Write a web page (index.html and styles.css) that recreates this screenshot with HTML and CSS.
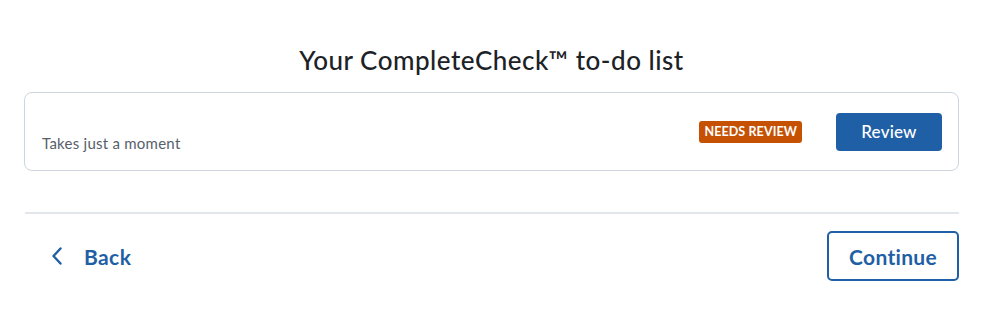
FILE: index.html
```html
<!DOCTYPE html>
<html lang="en">
<head>
<meta charset="utf-8">
<title>CompleteCheck</title>
<link rel="stylesheet" href="styles.css">
</head>
<body>
<main class="page">
  <h1 class="title">Your CompleteCheck™ to-do list</h1>
  <section class="card">
    <div class="card-text">
      <div class="card-heading"></div>
      <p class="card-sub">Takes just a moment</p>
    </div>
    <div class="card-actions">
      <span class="badge">NEEDS REVIEW</span>
      <button class="btn-primary">Review</button>
    </div>
  </section>
  <hr class="divider">
  <nav class="footer">
    <a class="back" href="#">
      <svg class="chev" width="12" height="18" viewBox="0 0 12 18" aria-hidden="true"><path d="M9.5 1.5 L2.5 9 L9.5 16.5" fill="none" stroke="#1f5fa6" stroke-width="2.4" stroke-linecap="round" stroke-linejoin="round"/></svg>
      <span>Back</span>
    </a>
    <button class="btn-outline">Continue</button>
  </nav>
</main>
</body>
</html>
```

FILE: styles.css
```css
* { box-sizing: border-box; }
body {
  margin: 0;
  background: #fff;
  font-family: Lato, "Noto Sans", "Liberation Sans", sans-serif;
  color: #1f2328;
}
.page {
  width: 935px;
  margin-left: 24px;
  padding-top: 42px;
}
.title {
  margin: 0;
  text-align: center;
  font-size: 26px;
  font-weight: 500;
  line-height: 36px;
  letter-spacing: 0.5px;
  color: #1d2226;
}
.card {
  margin-top: 14px;
  height: 79px;
  border: 1px solid #cdd6de;
  border-radius: 8px;
  padding: 0 16px 0 17px;
  display: flex;
  align-items: center;
  justify-content: space-between;
}
.card-text {
  align-self: flex-end;
  padding-bottom: 17px;
}
.card-sub {
  margin: 0;
  font-size: 15px;
  line-height: 20px;
  letter-spacing: 0.25px;
  color: #56606a;
}
.card-actions {
  display: flex;
  align-items: center;
  gap: 34px;
}
.badge {
  display: inline-flex;
  align-items: center;
  height: 22px;
  padding: 0 5px;
  background: #c65102;
  color: #fff;
  font-size: 12.5px;
  font-weight: 700;
  border-radius: 3px;
  letter-spacing: 0.1px;
}
.btn-primary {
  width: 106px;
  height: 38px;
  border: 0;
  border-radius: 4px;
  background: #1f5fa6;
  color: #fff;
  font-family: inherit;
  font-size: 17px;
  font-weight: 500;
  letter-spacing: 0.2px;
}
.divider {
  margin: 41px 0 0 1px;
  border: 0;
  height: 2px;
  background: #e3e7eb;
}
.footer {
  display: flex;
  justify-content: space-between;
  align-items: center;
  margin-top: 17px;
}
.back {
  display: flex;
  align-items: center;
  gap: 21px;
  padding-left: 27px;
  text-decoration: none;
  color: #1f5fa6;
  font-size: 21px;
  font-weight: 700;
  letter-spacing: 0.4px;
}
.btn-outline {
  width: 132px;
  height: 50px;
  border: 2px solid #1f5fa6;
  border-radius: 5px;
  background: #fff;
  color: #1f5fa6;
  font-family: inherit;
  font-size: 21px;
  font-weight: 700;
  letter-spacing: 0.3px;
}
```
